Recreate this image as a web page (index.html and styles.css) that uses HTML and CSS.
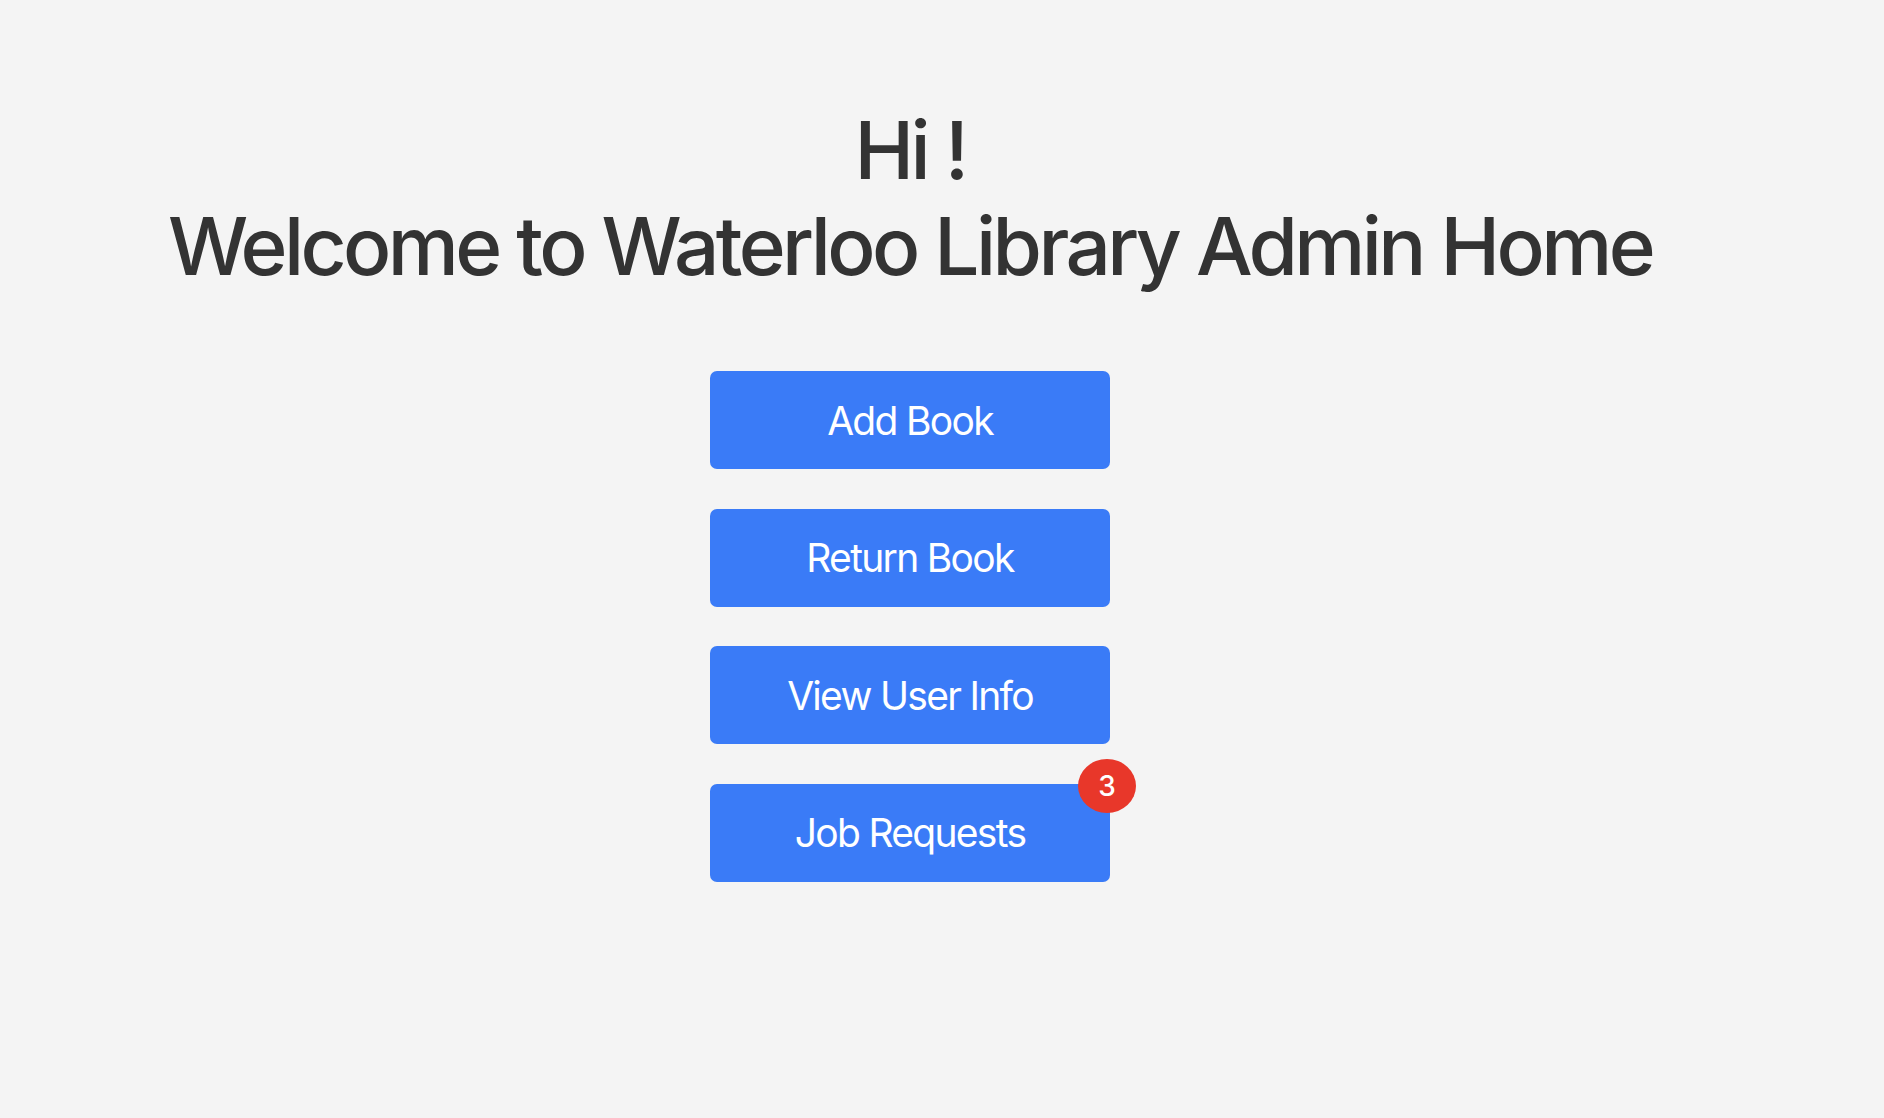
FILE: index.html
```html
<!DOCTYPE html>
<html lang="en">
<head>
<meta charset="utf-8">
<title>Admin Home</title>
<link rel="stylesheet" href="styles.css">
</head>
<body>
<main class="page">
  <h1 class="title">Hi !<br>Welcome to Waterloo Library Admin Home</h1>
  <nav class="actions">
    <button class="btn">Add Book</button>
    <button class="btn">Return Book</button>
    <button class="btn">View User Info</button>
    <button class="btn">Job Requests<span class="badge">3</span></button>
  </nav>
</main>
</body>
</html>
```
FILE: styles.css
```css
html, body {
  margin: 0;
  padding: 0;
  background: #f4f4f4;
}
body {
  font-family: Inter, "Noto Sans", "Liberation Sans", sans-serif;
  color: #333333;
}
.page {
  width: 1820px;
  display: flex;
  flex-direction: column;
  align-items: center;
  padding-top: 102px;
}
.title {
  margin: 0;
  font-size: 80px;
  font-weight: 500;
  line-height: 96px;
  letter-spacing: -3.6px;
  text-align: center;
}
.actions {
  margin-top: 77px;
  display: flex;
  flex-direction: column;
  gap: 39.5px;
}
.btn {
  position: relative;
  width: 400px;
  height: 98px;
  border: none;
  border-radius: 7px;
  background: #3a7bf7;
  color: #ffffff;
  font-family: Inter, "Noto Sans", "Liberation Sans", sans-serif;
  font-size: 39px;
  font-weight: 400;
  letter-spacing: -1.7px;
}
.badge {
  position: absolute;
  top: -25px;
  right: -26px;
  width: 58px;
  height: 54px;
  border-radius: 50%;
  background: #e8372a;
  color: #ffffff;
  font-size: 28px;
  font-weight: 500;
  letter-spacing: 0;
  display: flex;
  align-items: center;
  justify-content: center;
}
```
